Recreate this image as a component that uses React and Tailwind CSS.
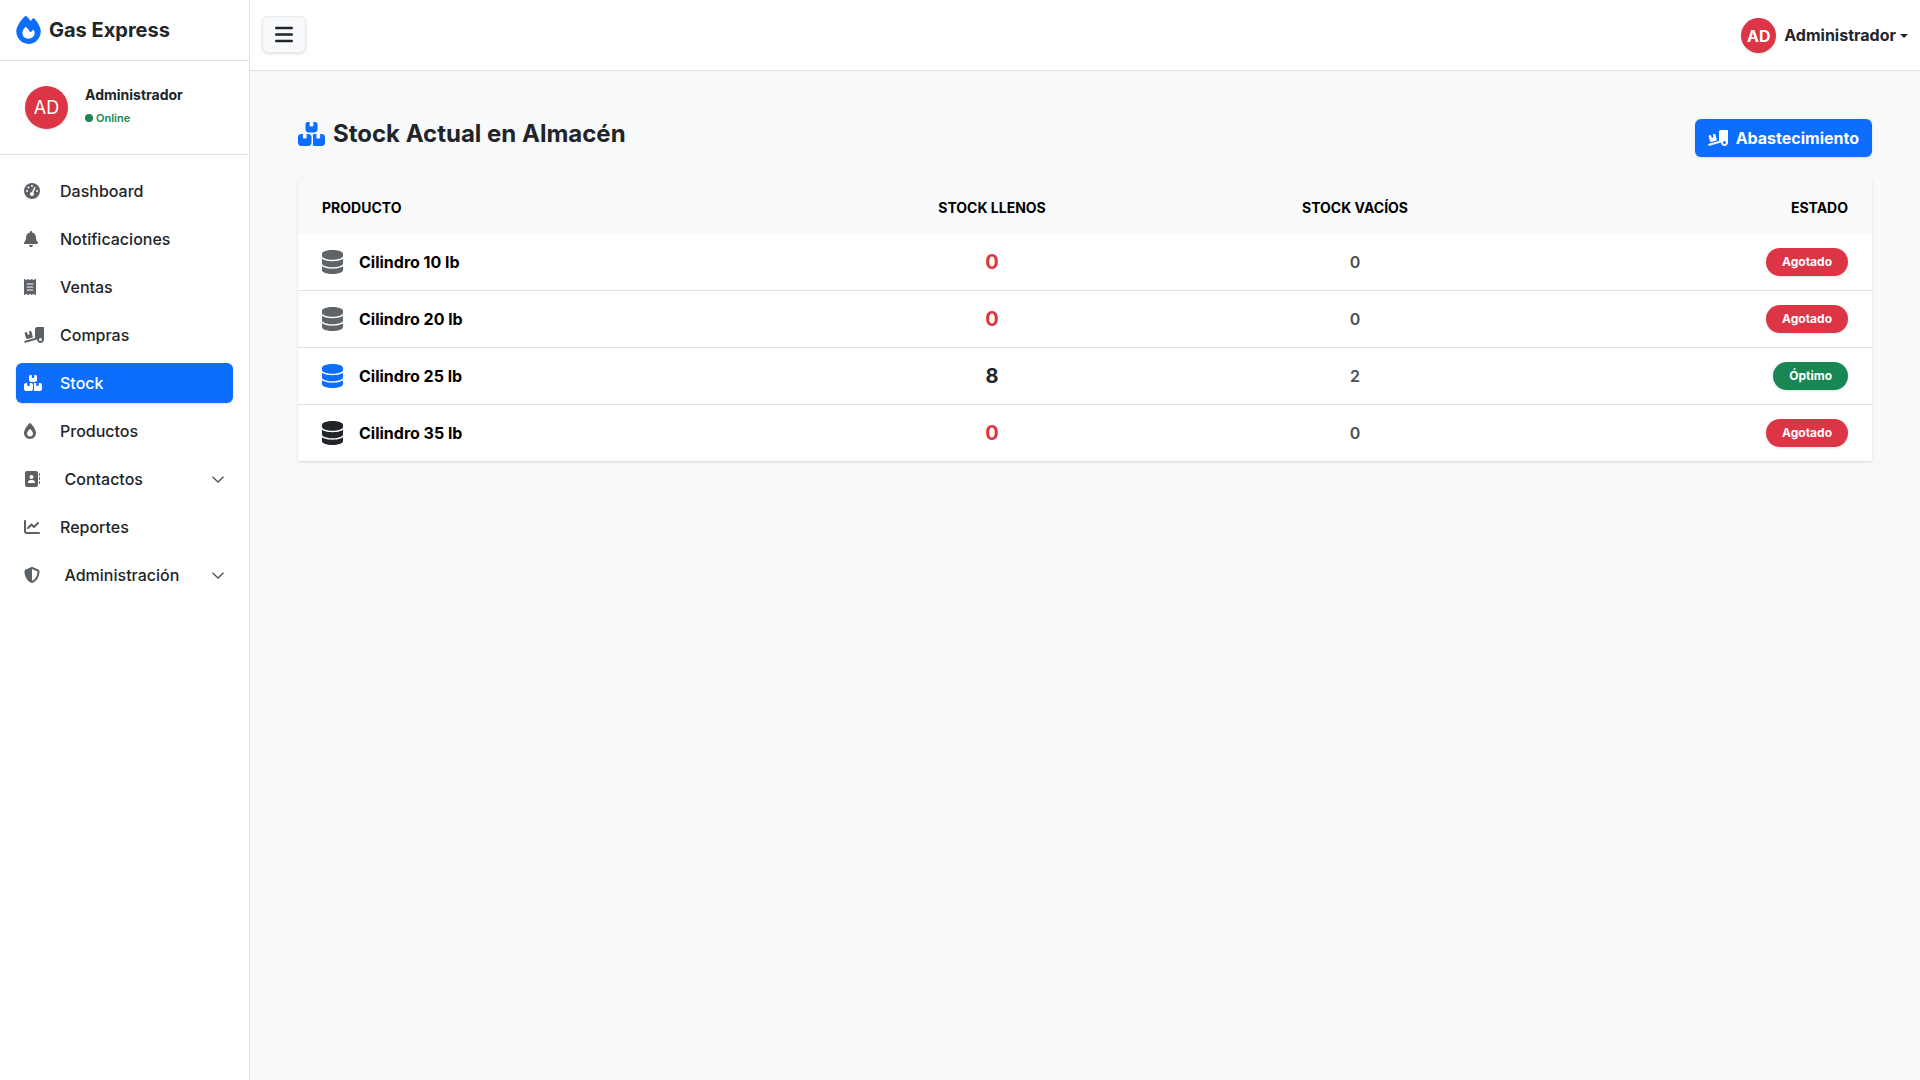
import React from 'react';
import {
  FaAddressBook,
  FaBars,
  FaBell,
  FaBoxesStacked,
  FaChartLine,
  FaDatabase,
  FaFire,
  FaFireFlameSimple,
  FaGaugeHigh,
  FaReceipt,
  FaShieldHalved,
  FaTruckRampBox,
} from 'react-icons/fa6';

const navItems = [
  { label: 'Dashboard', icon: FaGaugeHigh, iconSize: 'w-4' },
  { label: 'Notificaciones', icon: FaBell, iconSize: 'w-[14px]' },
  { label: 'Ventas', icon: FaReceipt, iconSize: 'w-3' },
  { label: 'Compras', icon: FaTruckRampBox, iconSize: 'w-5' },
  { label: 'Stock', icon: FaBoxesStacked, iconSize: 'w-[18px]', active: true },
  { label: 'Productos', icon: FaFireFlameSimple, iconSize: 'w-3' },
  { label: 'Contactos', icon: FaAddressBook, iconSize: 'w-4', submenu: true },
  { label: 'Reportes', icon: FaChartLine, iconSize: 'w-4' },
  { label: 'Administración', icon: FaShieldHalved, iconSize: 'w-4', submenu: true },
];

const products = [
  { name: 'Cilindro 10 lb', iconClass: 'text-[#5f6468]', full: 0, empty: 0, status: 'Agotado' },
  { name: 'Cilindro 20 lb', iconClass: 'text-[#5f6468]', full: 0, empty: 0, status: 'Agotado' },
  { name: 'Cilindro 25 lb', iconClass: 'text-[#0d6efd]', full: 8, empty: 2, status: 'Óptimo' },
  { name: 'Cilindro 35 lb', iconClass: 'text-[#212529]', full: 0, empty: 0, status: 'Agotado' },
];

const Chevron = () => (
  <svg viewBox="0 0 12 7" className="h-[7px] w-3 text-[#495057]" fill="none" stroke="currentColor" strokeWidth="1.3">
    <path d="M0.5 0.7 6 6 11.5 0.7" />
  </svg>
);

const Sidebar = () => (
  <aside className="w-[250px] shrink-0 border-r border-[#dee2e6] bg-white">
    <div className="flex h-[61px] items-center gap-2 border-b border-[#dee2e6] pl-4">
      <FaFire className="h-[28px] w-[25px] text-[#0d6efd]" />
      <span className="text-[20px] font-bold text-[#212529]">Gas Express</span>
    </div>
    <div className="flex h-[94px] items-center gap-[17px] border-b border-[#dee2e6] pl-[25px]">
      <div className="flex h-[43px] w-[43px] items-center justify-center rounded-full bg-[#dc3545] text-[18px] text-white shadow-sm">
        AD
      </div>
      <div className="-mt-[5px]">
        <div className="text-[14px] leading-[21px] font-bold text-[#212529]">Administrador</div>
        <div className="mt-[5px] flex items-center gap-[3px] text-[11px] leading-[16px] font-semibold text-[#198754]">
          <span className="h-2 w-2 rounded-full bg-[#198754]" />
          Online
        </div>
      </div>
    </div>
    <nav className="flex flex-col gap-2 px-4 pt-4">
      {navItems.map(({ label, icon: Icon, iconSize, active, submenu }) => (
        <div
          key={label}
          className={`flex h-10 items-center rounded-md pl-2 pr-[9px] text-[16px] font-medium ${
            active ? 'bg-[#0d6efd] text-white shadow-sm' : 'text-[#212529]'
          }`}
        >
          <span className="flex w-[36px] shrink-0 items-center">
            <Icon className={`h-4 ${iconSize} ${active ? 'text-white' : 'text-[#5c6166]'}`} />
          </span>
          <span className={submenu ? 'ml-[4.5px] flex-1' : 'flex-1'}>{label}</span>
          {submenu ? <Chevron /> : null}
        </div>
      ))}
    </nav>
  </aside>
);

const Topbar = () => (
  <header className="flex h-[71px] items-start justify-between border-b border-[#dee2e6] bg-white pl-3 pr-3 pt-4">
    <button
      type="button"
      className="flex h-[37px] w-[44px] items-center justify-center rounded-md border border-[#e9ecef] bg-[#f8f9fa] shadow-sm"
    >
      <FaBars className="h-[21px] w-[18px] text-[#212529]" />
    </button>
    <div className="mt-[2px] flex items-center">
      <div className="flex h-[35px] w-[35px] items-center justify-center rounded-full bg-[#dc3545] text-[16px] font-bold text-white shadow-sm">
        AD
      </div>
      <span className="-mt-px ml-2 text-[16px] font-bold text-[#212529]">Administrador</span>
      <span className="ml-1 h-0 w-0 border-x-[4px] border-t-[4px] border-x-transparent border-t-[#212529]" />
    </div>
  </header>
);

const StockTable = () => (
  <div className="overflow-hidden bg-white shadow-sm">
    <table className="w-full table-fixed text-[#212529]">
      <thead className="bg-[#f8f9fa] text-[14px] text-black">
        <tr className="h-[54px]">
          <th className="w-[517px] pl-6 text-left font-bold">PRODUCTO</th>
          <th className="w-[354px] text-center font-bold">STOCK LLENOS</th>
          <th className="w-[372px] text-center font-bold">STOCK VACÍOS</th>
          <th className="pr-6 text-right font-bold">ESTADO</th>
        </tr>
      </thead>
      <tbody>
        {products.map((product, index) => (
          <tr
            key={product.name}
            className={`${index === 0 ? 'h-[56px]' : 'h-[57px]'} ${
              index < products.length - 1 ? 'border-b border-[#dee2e6]' : ''
            }`}
          >
            <td className="pl-6">
              <div className="flex items-center gap-4">
                <FaDatabase className={`h-6 w-[21px] ${product.iconClass}`} />
                <span className="text-[16px] font-bold text-black">{product.name}</span>
              </div>
            </td>
            <td
              className={`text-center text-[20px] font-bold ${
                product.full === 0 ? 'text-[#dc3545]' : 'text-[#212529]'
              }`}
            >
              {product.full}
            </td>
            <td className="text-center text-[16px] font-semibold text-[#495057]">{product.empty}</td>
            <td className="pr-6 text-right">
              <span
                className={`inline-flex h-7 items-center rounded-full px-4 text-[12px] font-bold text-white shadow-sm ${
                  product.status === 'Óptimo' ? 'bg-[#198754]' : 'bg-[#dc3545]'
                }`}
              >
                {product.status}
              </span>
            </td>
          </tr>
        ))}
      </tbody>
    </table>
  </div>
);

const App = () => (
  <div className="flex min-h-screen bg-[#f8f9fa] font-['Inter',sans-serif]">
    <Sidebar />
    <div className="flex min-w-0 flex-1 flex-col">
      <Topbar />
      <main className="px-12 pt-12">
        <div className="mb-[23px] flex items-start justify-between">
          <h1 className="flex h-[29px] items-center gap-2 text-[24px] font-bold text-[#212529]">
            <FaBoxesStacked className="h-6 w-[27px] text-[#0d6efd]" />
            Stock Actual en Almacén
          </h1>
          <button
            type="button"
            className="flex h-[38px] items-center gap-2 rounded-md bg-[#0d6efd] px-[13px] text-[16px] font-bold text-white shadow-sm"
          >
            <FaTruckRampBox className="h-4 w-5" />
            Abastecimiento
          </button>
        </div>
        <StockTable />
      </main>
    </div>
  </div>
);

export default App;
